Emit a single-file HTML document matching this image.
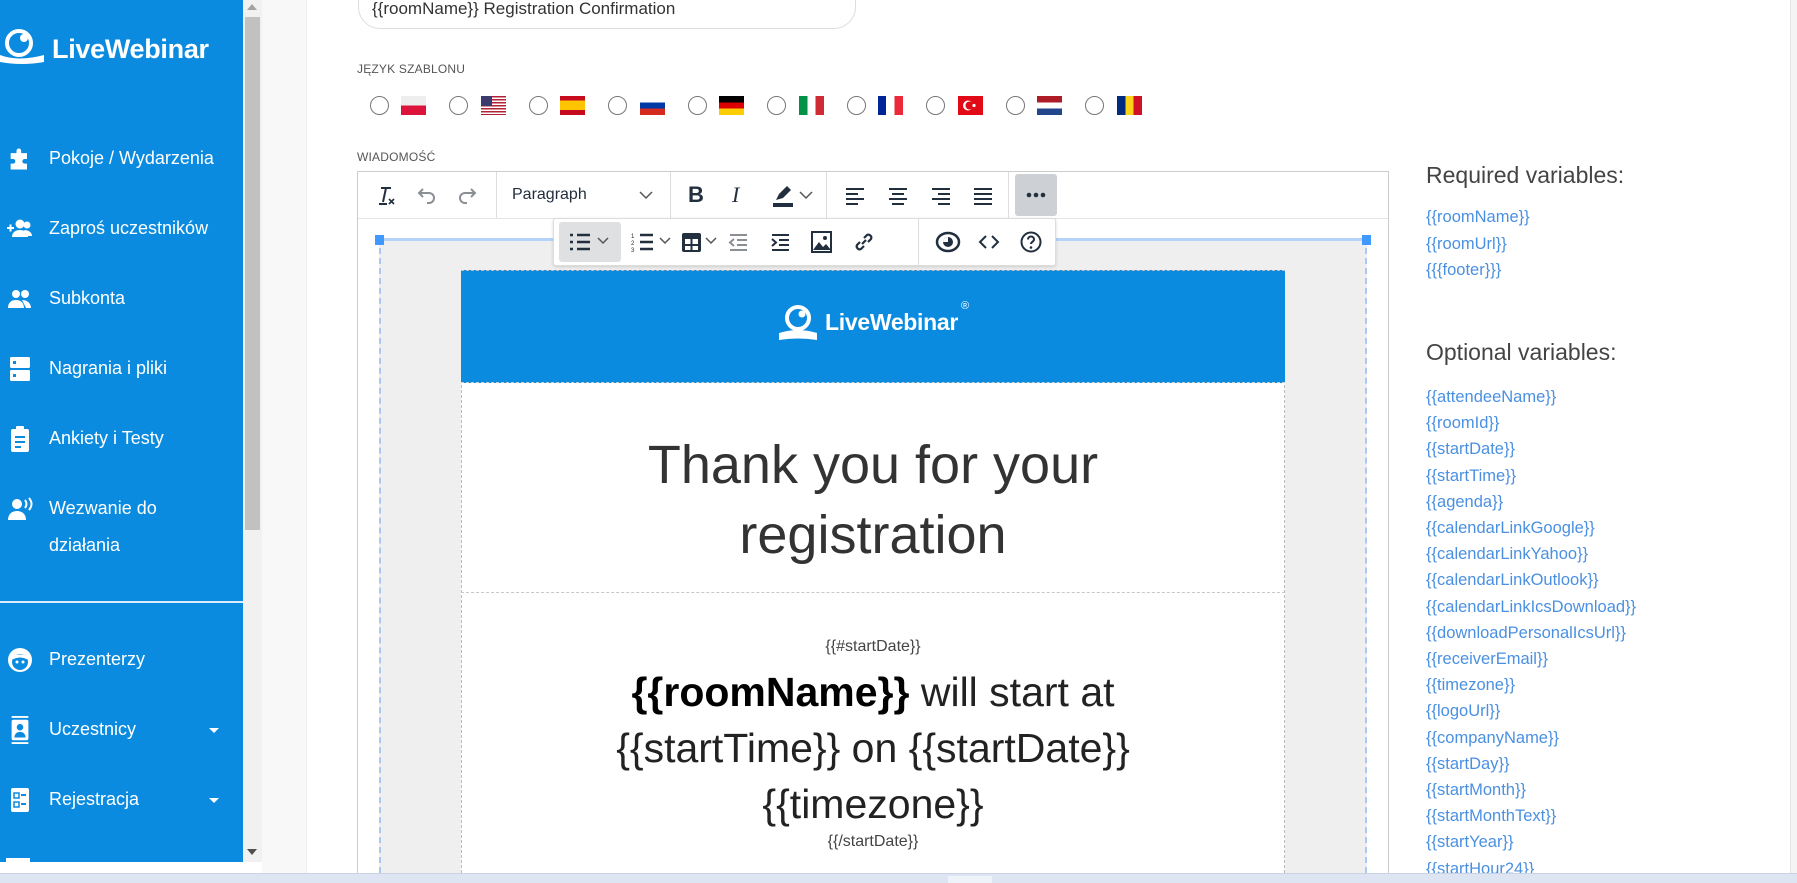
<!DOCTYPE html>
<html><head><meta charset="utf-8">
<style>
*{margin:0;padding:0;box-sizing:border-box}
body{width:1797px;height:883px;overflow:hidden;background:#fff;font-family:"Liberation Sans",sans-serif;position:relative}
.a{position:absolute}
#side{left:0;top:0;width:243px;height:862px;background:#0b8be0;color:#fff}
.mi{position:absolute;left:49px;font-size:18px;color:#fff;white-space:nowrap}
.ic{position:absolute;left:6px;width:28px;height:28px}
.car{position:absolute;left:209px;width:0;height:0;border-left:5px solid transparent;border-right:5px solid transparent;border-top:5px solid #fff}
.lbl{font-size:12px;color:#555;letter-spacing:.2px}
.rad{position:absolute;top:96px;width:19px;height:19px;border:1px solid #777;border-radius:50%;background:#fff}
.flag{position:absolute;top:96px;width:25px;height:19px;overflow:hidden}
.tb svg{position:absolute}
.var{position:absolute;left:1426px;font-size:16.5px;color:#4a90e2}
.ct{position:absolute;left:461px;width:824px;text-align:center;color:#111}
</style></head><body>

<div id="side" class="a">
  <svg class="a" style="left:0;top:28px" width="46" height="36" viewBox="0 0 46 36"><circle cx="19" cy="15" r="12" fill="none" stroke="#fff" stroke-width="4"/><circle cx="24" cy="10" r="4" fill="#fff"/><path d="M0 27 Q18 34 44 27 L44 34 Q22 38 0 34Z" fill="#fff"/></svg>
  <div class="a" style="left:52px;top:34px;font-size:27px;font-weight:bold;letter-spacing:-.3px">LiveWebinar</div>

  <svg class="ic" style="top:145px" viewBox="0 0 24 24"><path d="M4 7h5V5a2 2 0 014 0v2h5v5h-2a2 2 0 000 4h2v5H4v-5h2a2 2 0 000-4H4z" fill="#fff"/></svg>
  <div class="mi" style="top:148px">Pokoje / Wydarzenia</div>
  <svg class="ic" style="top:215px" viewBox="0 0 28 24"><circle cx="14" cy="7" r="4.5" fill="#fff"/><circle cx="21" cy="8" r="3.5" fill="#fff"/><path d="M6 20c0-5 4-7 8-7s8 2 8 7z M18 13c4 0 8 2 8 6h-4" fill="#fff"/><path d="M1 11h7M4.5 7.5v7" stroke="#fff" stroke-width="2"/></svg>
  <div class="mi" style="top:218px">Zaproś uczestników</div>
  <svg class="ic" style="top:285px" viewBox="0 0 28 24"><circle cx="10" cy="7" r="4" fill="#fff"/><circle cx="19" cy="7" r="4" fill="#fff"/><path d="M2 21c0-5 3-8 8-8s8 3 8 8zM16 13c5 0 9 3 9 8h-5" fill="#fff"/></svg>
  <div class="mi" style="top:288px">Subkonta</div>
  <svg class="ic" style="top:355px" viewBox="0 0 24 28"><rect x="2" y="2" width="20" height="11" rx="1.5" fill="#fff"/><rect x="2" y="15" width="20" height="11" rx="1.5" fill="#fff"/><rect x="5" y="6" width="3" height="3" fill="#0b8be0"/><rect x="5" y="19" width="3" height="3" fill="#0b8be0"/></svg>
  <div class="mi" style="top:358px">Nagrania i pliki</div>
  <svg class="ic" style="top:425px" viewBox="0 0 24 28"><rect x="3" y="4" width="18" height="23" rx="2" fill="#fff"/><rect x="8" y="1" width="8" height="5" rx="1" fill="#fff"/><path d="M7 12h10M7 17h10M7 22h6" stroke="#0b8be0" stroke-width="2"/></svg>
  <div class="mi" style="top:428px">Ankiety i Testy</div>
  <svg class="ic" style="top:495px" viewBox="0 0 28 26"><circle cx="11" cy="8" r="5" fill="#fff"/><path d="M2 24c0-6 4-9 9-9s9 3 9 9z" fill="#fff"/><path d="M19 4q3 4 0 8M23 2q5 6 0 12" stroke="#fff" stroke-width="2" fill="none"/></svg>
  <div class="mi" style="top:498px">Wezwanie do</div>
  <div class="mi" style="top:535px">działania</div>
  <div class="a" style="left:0;top:601px;width:243px;height:2px;background:#d8ecfa"></div>
  <svg class="ic" style="top:646px" viewBox="0 0 28 28"><circle cx="14" cy="14" r="12" fill="#fff"/><circle cx="14" cy="16" r="8" fill="#0b8be0"/><circle cx="11" cy="16" r="1.5" fill="#fff"/><circle cx="17" cy="16" r="1.5" fill="#fff"/><path d="M6 12q8-4 16 0" stroke="#fff" stroke-width="3" fill="none"/></svg>
  <div class="mi" style="top:649px">Prezenterzy</div>
  <svg class="ic" style="top:716px" viewBox="0 0 24 30"><rect x="3" y="4" width="18" height="22" rx="2" fill="#fff"/><rect x="3" y="0" width="18" height="2" fill="#fff"/><rect x="3" y="28" width="18" height="2" fill="#fff"/><circle cx="12" cy="12" r="3.5" fill="#0b8be0"/><path d="M6 23c0-4 3-6 6-6s6 2 6 6z" fill="#0b8be0"/></svg>
  <div class="mi" style="top:719px">Uczestnicy</div>
  <div class="car" style="top:728px"></div>
  <svg class="ic" style="top:786px" viewBox="0 0 24 28"><rect x="3" y="2" width="18" height="24" rx="2" fill="#fff"/><rect x="6" y="7" width="5" height="5" fill="none" stroke="#0b8be0" stroke-width="1.5"/><rect x="6" y="16" width="5" height="5" fill="none" stroke="#0b8be0" stroke-width="1.5"/><path d="M13 9h5M13 18h5" stroke="#0b8be0" stroke-width="2"/></svg>
  <div class="mi" style="top:789px">Rejestracja</div>
  <div class="car" style="top:798px"></div>
  <div class="a" style="left:6px;top:858px;width:24px;height:4px;background:#fff"></div>
</div>
<!-- scrollbar -->
<div class="a" style="left:243px;top:0;width:19px;height:862px;background:#f1f1f1"></div>
<div class="a" style="left:245px;top:17px;width:15px;height:513px;background:#c1c1c1"></div>
<div class="a" style="left:247px;top:4px;width:0;height:0;border-left:5px solid transparent;border-right:5px solid transparent;border-bottom:6px solid #a3a3a3"></div>
<div class="a" style="left:247px;top:849px;width:0;height:0;border-left:5px solid transparent;border-right:5px solid transparent;border-top:6px solid #505050"></div>
<div class="a" style="left:262px;top:0;width:45px;height:873px;background:#f8f8f8;border-right:1px solid #eee"></div>
<div class="a" style="left:0;top:862px;width:262px;height:11px;background:#fff"></div>

<!-- subject input -->
<div class="a" style="left:358px;top:-20px;width:498px;height:49px;border:1px solid #ddd;border-radius:22px;background:#fff"></div>
<div class="a" style="left:372px;top:-1px;font-size:17px;color:#333">{{roomName}} Registration Confirmation</div>

<div class="a lbl" style="left:357px;top:62px">JĘZYK SZABLONU</div>
<!-- radios & flags -->
<div class="rad" style="left:370px"></div>
<div class="flag" style="left:401px;background:linear-gradient(#eee 50%,#dc143c 50%)"></div>
<div class="rad" style="left:449px"></div>
<div class="flag" style="left:481px;background:repeating-linear-gradient(#b22234 0 1.5px,#fff 1.5px 3px)"><div style="width:11px;height:10px;background:#3c3b6e"></div></div>
<div class="rad" style="left:529px"></div>
<div class="flag" style="left:560px;background:linear-gradient(#c60b1e 25%,#ffc400 25% 75%,#c60b1e 75%)"></div>
<div class="rad" style="left:608px"></div>
<div class="flag" style="left:640px;background:linear-gradient(#fff 33%,#0039a6 33% 66%,#d52b1e 66%)"></div>
<div class="rad" style="left:688px"></div>
<div class="flag" style="left:719px;background:linear-gradient(#000 33%,#dd0000 33% 66%,#ffce00 66%)"></div>
<div class="rad" style="left:767px"></div>
<div class="flag" style="left:799px;background:linear-gradient(90deg,#009246 33%,#fff 33% 66%,#ce2b37 66%)"></div>
<div class="rad" style="left:847px"></div>
<div class="flag" style="left:878px;background:linear-gradient(90deg,#002395 33%,#fff 33% 66%,#ed2939 66%)"></div>
<div class="rad" style="left:926px"></div>
<div class="flag" style="left:958px;background:#e30a17"><svg width="25" height="19"><circle cx="10" cy="9.5" r="5" fill="#fff"/><circle cx="11.5" cy="9.5" r="4" fill="#e30a17"/><circle cx="16" cy="9.5" r="1.6" fill="#fff"/></svg></div>
<div class="rad" style="left:1006px"></div>
<div class="flag" style="left:1037px;background:linear-gradient(#ae1c28 33%,#fff 33% 66%,#21468b 66%)"></div>
<div class="rad" style="left:1085px"></div>
<div class="flag" style="left:1117px;background:linear-gradient(90deg,#002b7f 33%,#fcd116 33% 66%,#ce1126 66%)"></div>

<div class="a lbl" style="left:357px;top:150px">WIADOMOŚĆ</div>

<!-- editor -->
<div class="a" style="left:357px;top:171px;width:1032px;height:702px;border:1px solid #ccc;border-bottom:none;background:#fff"></div>
<div class="a" style="left:358px;top:218px;width:1030px;height:1px;background:#e4e4e4"></div>
<div class="a tb" style="left:358px;top:172px;width:700px;height:46px">
  <div class="a" style="left:138px;top:0;width:1px;height:46px;background:#ddd"></div>
  <div class="a" style="left:312px;top:0;width:1px;height:46px;background:#ddd"></div>
  <div class="a" style="left:468px;top:0;width:1px;height:46px;background:#ddd"></div>
  <div class="a" style="left:650px;top:0;width:1px;height:46px;background:#ddd"></div>
  <div class="a" style="left:657px;top:2px;width:42px;height:42px;background:#cdd0d4;border-radius:3px"></div>
  <svg style="left:16px;top:12px" width="24" height="24" viewBox="0 0 24 24"><path d="M7 4h10M12 4l-3 14M5 20h8" stroke="#222f3e" stroke-width="2" fill="none"/><path d="M15 15l5 5M20 15l-5 5" stroke="#222f3e" stroke-width="1.6"/></svg>
  <svg style="left:56px;top:12px" width="24" height="24" viewBox="0 0 24 24"><path d="M6 9h9a5 5 0 010 10h-2M9 5L5 9l4 4" stroke="#8a8f95" stroke-width="2" fill="none"/></svg>
  <svg style="left:98px;top:12px" width="24" height="24" viewBox="0 0 24 24"><path d="M18 9H9a5 5 0 000 10h2M15 5l4 4-4 4" stroke="#8a8f95" stroke-width="2" fill="none"/></svg>
  <div class="a" style="left:154px;top:14px;font-size:16px;color:#222f3e">Paragraph</div>
  <svg style="left:280px;top:16px" width="16" height="14"><path d="M2 4l6 6 6-6" stroke="#555" stroke-width="1.5" fill="none"/></svg>
  <div class="a" style="left:330px;top:10px;font-size:22px;font-weight:bold;color:#222f3e">B</div>
  <div class="a" style="left:374px;top:10px;font-size:22px;font-style:italic;font-family:'Liberation Serif',serif;color:#222f3e">I</div>
  <svg style="left:412px;top:11px" width="26" height="26" viewBox="0 0 26 26"><path d="M6 17l3-6 8-8 4 4-8 8z" fill="#222f3e"/><rect x="3" y="20" width="20" height="4" fill="#222f3e"/></svg>
  <svg style="left:440px;top:16px" width="16" height="14"><path d="M2 4l6 6 6-6" stroke="#555" stroke-width="1.5" fill="none"/></svg>
  <svg style="left:486px;top:13px" width="22" height="22"><path d="M2 4h18M2 9h12M2 14h18M2 19h12" stroke="#222f3e" stroke-width="2"/></svg>
  <svg style="left:529px;top:13px" width="22" height="22"><path d="M2 4h18M5 9h12M2 14h18M5 19h12" stroke="#222f3e" stroke-width="2"/></svg>
  <svg style="left:572px;top:13px" width="22" height="22"><path d="M2 4h18M8 9h12M2 14h18M8 19h12" stroke="#222f3e" stroke-width="2"/></svg>
  <svg style="left:614px;top:13px" width="22" height="22"><path d="M2 4h18M2 9h18M2 14h18M2 19h18" stroke="#222f3e" stroke-width="2"/></svg>
  <svg style="left:668px;top:18px" width="20" height="10"><circle cx="3" cy="5" r="2.3" fill="#222f3e"/><circle cx="10" cy="5" r="2.3" fill="#222f3e"/><circle cx="17" cy="5" r="2.3" fill="#222f3e"/></svg>
</div>

<!-- iframe area -->
<div class="a" style="left:379px;top:238px;width:988px;height:645px;background:#efefef;border-left:2px dashed #a9c9f2;border-right:2px dashed #a9c9f2;border-top:3px solid #b4d3fa"></div>
<div class="a" style="left:375px;top:235px;width:9px;height:10px;background:#4099ff"></div>
<div class="a" style="left:1362px;top:235px;width:9px;height:10px;background:#4099ff"></div>
<div class="a" style="left:461px;top:270px;width:824px;height:613px;background:#fff;border-left:1px dashed #bbb;border-right:1px dashed #bbb"></div>
<div class="a" style="left:461px;top:270px;width:824px;height:113px;background:#0b8be0;border-top:1px dashed #bbb;border-bottom:1px dashed #ccc"></div>
<svg class="a" style="left:776px;top:303px" width="44" height="38" viewBox="0 0 44 38"><circle cx="22" cy="15" r="11" fill="none" stroke="#fff" stroke-width="4"/><circle cx="26" cy="11" r="3.5" fill="#fff"/><path d="M3 30 Q22 24 41 30 L41 37 Q22 34 3 37Z" fill="#fff"/></svg>
<div class="a" style="left:825px;top:309px;font-size:23px;font-weight:bold;color:#fff;letter-spacing:-.3px">LiveWebinar</div>
<div class="a" style="left:961px;top:300px;font-size:11px;color:#fff">®</div>

<div class="ct" style="top:430px;font-size:54px;line-height:70px;color:#333">Thank you for your<br>registration</div>
<div class="a" style="left:461px;top:592px;width:824px;height:1px;border-top:1px dashed #c8c8c8"></div>
<div class="ct" style="top:638px;font-size:16px;color:#444">{{#startDate}}</div>
<div class="ct" style="top:664px;font-size:41px;line-height:56px;color:#222"><b style="color:#000">{{roomName}}</b> will start at<br>{{startTime}} on {{startDate}}<br>{{timezone}}</div>
<div class="ct" style="top:833px;font-size:16px;color:#444">{{/startDate}}</div>

<!-- overflow toolbar -->
<div class="a tb" style="left:553px;top:218px;width:503px;height:48px;background:#fff;border:1px solid #ddd;border-radius:3px;box-shadow:0 1px 3px rgba(0,0,0,.15)">
  <div class="a" style="left:5px;top:3px;width:62px;height:40px;background:#dee0e2;border-radius:3px"></div>
  <div class="a" style="left:364px;top:0;width:1px;height:46px;background:#ddd"></div>
  <svg style="left:14px;top:12px" width="24" height="22"><path d="M2 4h3M2 11h3M2 18h3M9 4h13M9 11h13M9 18h13" stroke="#222f3e" stroke-width="2.4"/></svg>
  <svg style="left:42px;top:16px" width="14" height="12"><path d="M2 3l5 5 5-5" stroke="#555" stroke-width="1.5" fill="none"/></svg>
  <svg style="left:77px;top:12px" width="24" height="22"><path d="M9 4h13M9 11h13M9 18h13" stroke="#222f3e" stroke-width="2.4"/><text x="0" y="7" font-size="6" fill="#222f3e" font-family="Liberation Sans">1</text><text x="0" y="14" font-size="6" fill="#222f3e" font-family="Liberation Sans">2</text><text x="0" y="21" font-size="6" fill="#222f3e" font-family="Liberation Sans">3</text></svg>
  <svg style="left:104px;top:16px" width="14" height="12"><path d="M2 3l5 5 5-5" stroke="#555" stroke-width="1.5" fill="none"/></svg>
  <svg style="left:126px;top:12px" width="24" height="24"><rect x="2" y="2" width="19" height="19" rx="2" fill="#222f3e"/><rect x="5" y="8" width="5.5" height="5" fill="#fff"/><rect x="12.5" y="8" width="5.5" height="5" fill="#fff"/><rect x="5" y="15" width="5.5" height="4" fill="#fff"/><rect x="12.5" y="15" width="5.5" height="4" fill="#fff"/></svg>
  <svg style="left:150px;top:16px" width="14" height="12"><path d="M2 3l5 5 5-5" stroke="#555" stroke-width="1.5" fill="none"/></svg>
  <svg style="left:172px;top:12px" width="24" height="24"><path d="M4 4h17M11 9h10M11 14h10M4 19h17M8 8l-4 3.5 4 3.5" stroke="#8a8f95" stroke-width="2" fill="none"/></svg>
  <svg style="left:214px;top:12px" width="24" height="24"><path d="M4 4h17M11 9h10M11 14h10M4 19h17M4 8l4 3.5-4 3.5" stroke="#222f3e" stroke-width="2" fill="none"/></svg>
  <svg style="left:256px;top:11px" width="24" height="24"><rect x="2" y="2" width="19" height="20" fill="none" stroke="#222f3e" stroke-width="2"/><path d="M3 20l6-8 4 5 3-3 5 6z" fill="#222f3e"/><circle cx="15" cy="8" r="2" fill="#222f3e"/></svg>
  <svg style="left:298px;top:11px" width="24" height="24"><path d="M10 14l4-4M8 12l-3 3a3 3 0 004 4l3-3M16 12l3-3a3 3 0 00-4-4l-3 3" stroke="#222f3e" stroke-width="2.2" fill="none"/></svg>
  <svg style="left:381px;top:11px" width="26" height="24"><ellipse cx="13" cy="12" rx="11" ry="9" fill="none" stroke="#222f3e" stroke-width="2.5"/><circle cx="13" cy="12" r="5" fill="#222f3e"/><path d="M13 7a5 5 0 00-5 5h5z" fill="#fff"/></svg>
  <svg style="left:424px;top:12px" width="22" height="22"><path d="M8 5l-6 6 6 6M14 5l6 6-6 6" stroke="#222f3e" stroke-width="2" fill="none"/></svg>
  <svg style="left:465px;top:11px" width="24" height="24"><circle cx="12" cy="12" r="9.5" fill="none" stroke="#222f3e" stroke-width="2"/><path d="M9 9.5a3 3 0 116 0c0 2-3 2.5-3 4.5" stroke="#222f3e" stroke-width="2" fill="none"/><circle cx="12" cy="17.5" r="1.3" fill="#222f3e"/></svg>
</div>

<!-- right column -->
<div class="a" style="left:1426px;top:162px;font-size:23px;color:#444">Required variables:</div>
<div class="var" style="top:208px">{{roomName}}</div>
<div class="var" style="top:235px">{{roomUrl}}</div>
<div class="var" style="top:261px">{{{footer}}}</div>
<div class="a" style="left:1426px;top:339px;font-size:23px;color:#444">Optional variables:</div>
<div class="a" style="left:1426px;top:384px;font-size:16.5px;line-height:26.2px;color:#4a90e2">{{attendeeName}}<br>{{roomId}}<br>{{startDate}}<br>{{startTime}}<br>{{agenda}}<br>{{calendarLinkGoogle}}<br>{{calendarLinkYahoo}}<br>{{calendarLinkOutlook}}<br>{{calendarLinkIcsDownload}}<br>{{downloadPersonalIcsUrl}}<br>{{receiverEmail}}<br>{{timezone}}<br>{{logoUrl}}<br>{{companyName}}<br>{{startDay}}<br>{{startMonth}}<br>{{startMonthText}}<br>{{startYear}}<br>{{startHour24}}</div>
<div class="a" style="left:1790px;top:0;width:7px;height:873px;background:#f4f4f4;border-left:1px solid #e5e5e5"></div>

<!-- bottom bar -->
<div class="a" style="left:0;top:873px;width:1797px;height:10px;background:#dde5f3;border-top:1px solid #c9d3e3"></div>
<div class="a" style="left:948px;top:876px;width:44px;height:7px;background:#eef2f9"></div>
</body></html>
